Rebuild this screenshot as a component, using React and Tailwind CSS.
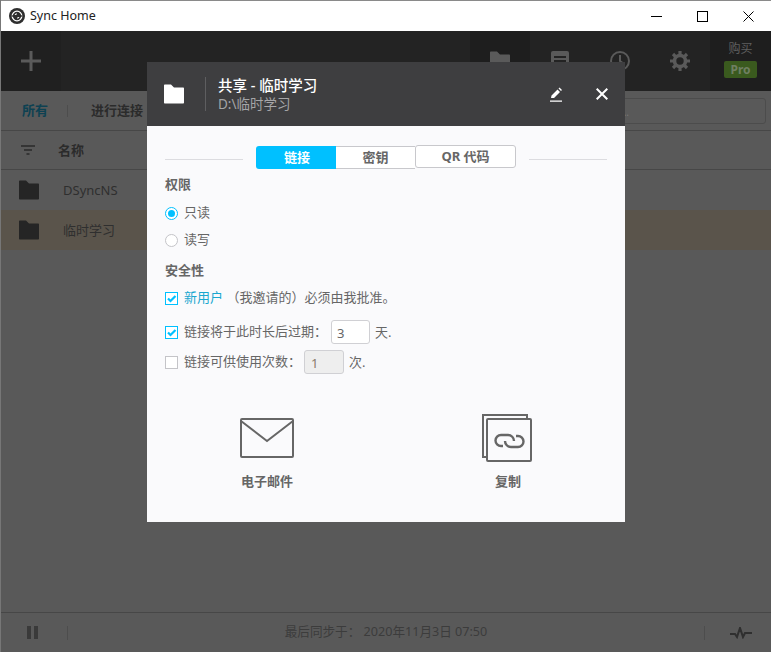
const font = { fontFamily: '"Noto Sans", "Noto Sans CJK SC", sans-serif' };

function FolderIcon({ className }) {
  return (
    <svg viewBox="0 0 20 20" className={className} fill="currentColor">
      <path d="M0 1.5C0 .9.4.5 1 .5h6l3 3h9c.6 0 1 .4 1 1v14c0 .6-.4 1-1 1H1c-.6 0-1-.4-1-1z" />
    </svg>
  );
}

function Radio({ checked, label }) {
  return (
    <div className="flex items-center gap-[6px] h-[20px]">
      <span
        className={`w-[13px] h-[13px] rounded-full border flex items-center justify-center bg-white ${
          checked ? "border-[#00c0ff]" : "border-[#c4c4c8]"
        }`}
      >
        {checked && <span className="w-[7px] h-[7px] rounded-full bg-[#00c0ff]" />}
      </span>
      <span className="text-[13px] text-[#666]">{label}</span>
    </div>
  );
}

function Check({ checked }) {
  return (
    <span
      className={`w-[13px] h-[13px] border flex items-center justify-center bg-white shrink-0 ${
        checked ? "border-[#00c0ff]" : "border-[#c4c4c8]"
      }`}
    >
      {checked && (
        <svg viewBox="0 0 11 11" className="w-[11px] h-[11px]" fill="none" stroke="#00c0ff" strokeWidth="2.2">
          <path d="M2 5.5l2.5 2.5 5-5" />
        </svg>
      )}
    </span>
  );
}

export default function App() {
  const tabs = [
    { label: "链接", cls: "w-[80px] h-[23px] pl-[2px] bg-[#00c0ff] text-white rounded-l-[3px]" },
    { label: "密钥", cls: "w-[79px] h-[23px] border-y border-[#c8c8cc] text-[#666] bg-white" },
    { label: "QR 代码", cls: "w-[101px] h-[23px] -mt-px border border-[#c8c8cc] text-[#666] rounded-[3px] bg-white" },
  ];

  return (
    <div className="relative w-[771px] h-[652px] overflow-hidden bg-[#595959] flex flex-col border-l border-[#777]" style={font}>
      <div className="h-px bg-[#8a8a8a] shrink-0" />

      {/* title bar */}
      <div className="h-[30px] bg-white flex items-center shrink-0">
        <svg viewBox="0 0 16 16" className="w-[16px] h-[16px] ml-[8px]">
          <circle cx="8" cy="8" r="8" fill="#2e2e2e" />
          <circle cx="8" cy="8" r="4.8" fill="none" stroke="#fff" strokeWidth="1.3" />
          <path d="M2.500 8h11" stroke="#2e2e2e" strokeWidth="1.400" />
          <path d="M5.500 7l2-2.200v2.200zM10.500 9l-2 2.200V9z" fill="#fff" />
        </svg>
        <span className="ml-[5px] text-[12.5px] text-[#222]">Sync Home</span>
        <div className="ml-auto flex items-center">
          <button className="w-[46px] h-[30px] flex items-center justify-center">
            <span className="w-[11px] h-px bg-black" />
          </button>
          <button className="w-[46px] h-[30px] flex items-center justify-center">
            <span className="w-[11px] h-[11px] border border-black" />
          </button>
          <button className="w-[46px] h-[30px] flex items-center justify-center">
            <svg viewBox="0 0 11 11" className="w-[11px] h-[11px]" stroke="#000" strokeWidth="1">
              <path d="M.5.5l10 10M10.500.5l-10 10" />
            </svg>
          </button>
        </div>
      </div>

      {/* toolbar */}
      <div className="h-[60px] bg-[#232323] flex shrink-0">
        <div className="w-[60px] bg-[#202020] flex items-center justify-center">
          <svg viewBox="0 0 20 20" className="w-[20px] h-[20px]" stroke="#5a5a5a" strokeWidth="3">
            <path d="M10 0v20M0 10h20" />
          </svg>
        </div>
        <div className="ml-auto flex">
          <div className="w-[60px] bg-[#1e1e1e] flex items-center justify-center">
            <FolderIcon className="w-[20px] h-[20px] text-[#5a5a5a]" />
          </div>
          <div className="w-[60px] flex items-center justify-center">
            <svg viewBox="0 0 18 20" className="w-[18px] h-[20px]">
              <rect width="18" height="20" rx="2" fill="#5a5a5a" />
              <path d="M3 6h12M3 10h12" stroke="#232323" strokeWidth="2" />
            </svg>
          </div>
          <div className="w-[60px] flex items-center justify-center">
            <svg viewBox="0 0 20 20" className="w-[20px] h-[20px]" fill="none" stroke="#5a5a5a" strokeWidth="2">
              <circle cx="10" cy="10" r="9" />
              <path d="M10 4v6l4 3" />
            </svg>
          </div>
          <div className="w-[60px] flex items-center justify-center">
            <svg viewBox="0 0 20 20" className="w-[20px] h-[20px]" fill="none" stroke="#5a5a5a">
              <circle cx="10" cy="10" r="5.5" strokeWidth="3.6" />
              <path
                d="M10 0v4M10 16v4M0 10h4M16 10h4M3 3l2.800 2.800M14.200 14.200L17 17M17 3l-2.800 2.800M5.800 14.200L3 17"
                strokeWidth="3.2"
              />
            </svg>
          </div>
          <div className="w-[61px] bg-[#1e1e1e] flex flex-col items-center pt-[9px]">
            <span className="text-[12px] leading-[18px] text-[#5e5e5e]">购买</span>
            <span className="mt-[3px] w-[33px] h-[17px] rounded-[2px] bg-[#3a5a1e] text-[#6f7f62] text-[12px] leading-[17px] font-bold text-center">
              Pro
            </span>
          </div>
        </div>
      </div>

      {/* filter bar */}
      <div className="h-[40px] flex items-center shrink-0 border-b border-[#474747]">
        <span className="ml-[21px] text-[13px] font-bold text-[#0d4152]">所有</span>
        <span className="ml-[19px] w-px h-[12px] bg-[#4d4d4d]" />
        <span className="ml-[23px] text-[13px] font-bold text-[#2b2b2b]">进行连接</span>
        <div className="ml-auto mr-[5px] w-[200px] h-[26px] border border-[#4c4c4c] rounded-[3px] pl-[54px] text-[10px] leading-[26px] text-[#777]">
          ...
        </div>
      </div>

      {/* list */}
      <div className="h-[39px] flex items-center shrink-0 border-b border-[#474747]">
        <svg viewBox="0 0 14 10" className="ml-[20px] w-[14px] h-[10px]" stroke="#2a2a2a" strokeWidth="1.6">
          <path d="M0 1h14M3 5h8M5.500 9h3" />
        </svg>
        <span className="ml-[23px] mt-[2px] text-[13px] font-bold text-[#2b2b2b]">名称</span>
      </div>
      {[
        { name: "DSyncNS", bg: "" },
        { name: "临时学习", bg: "bg-[#5a544b]" },
      ].map((row) => (
        <div key={row.name} className={`h-[40px] flex items-center shrink-0 ${row.bg}`}>
          <FolderIcon className="ml-[18px] w-[20px] h-[20px] text-[#252525]" />
          <span className="ml-[24px] mt-[2px] text-[13px] text-[#2f2f2f]">{row.name}</span>
        </div>
      ))}

      {/* status bar */}
      <div className="mt-auto h-[40px] flex items-center border-t border-[#474747] shrink-0">
        <div className="ml-[26px] flex gap-[3px]">
          <span className="w-[4px] h-[13px] bg-[#3a3a3a]" />
          <span className="w-[4px] h-[13px] bg-[#3a3a3a]" />
        </div>
        <span className="ml-[29px] w-px h-[14px] bg-[#4d4d4d]" />
        <span className="flex-1 text-center text-[12.6px] text-[#3c3c3c]">最后同步于： 2020年11月3日 07:50</span>
        <span className="w-px h-[14px] bg-[#4d4d4d]" />
        <svg viewBox="0 0 22 12" className="ml-[25px] mr-[19px] w-[22px] h-[12px]" fill="none" stroke="#2f2f2f" strokeWidth="2">
          <path d="M0 7h5l2 3 3-9 3 9 2-4h7" />
        </svg>
      </div>

      {/* share dialog */}
      <div className="absolute left-[146px] top-[62px] w-[478px] h-[460px] bg-[#fafafc] flex flex-col">
        <div className="h-[64px] bg-[#3e3e40] flex items-center shrink-0">
          <FolderIcon className="ml-[17px] w-[20px] h-[20px] text-white" />
          <span className="ml-[21px] w-px h-[34px] bg-[#5e5e60]" />
          <div className="ml-[12px] flex flex-col">
            <span className="text-[14.5px] leading-[20px] font-medium text-white">共享 - 临时学习</span>
            <span className="text-[13.5px] leading-[18px] text-[#a5a5a7]">D:\临时学习</span>
          </div>
          <svg viewBox="0 0 12 15" className="ml-auto w-[12px] h-[15px]" fill="#fff">
            <path d="M1 11l.5-2.500 6-6L10 5l-6 6zM8.500 1.500l1-1L12 3l-1 1zM0 13.500h12v1.300H0z" />
          </svg>
          <svg viewBox="0 0 12 12" className="ml-[34px] mr-[17px] w-[12px] h-[12px]" stroke="#fff" strokeWidth="2">
            <path d="M.7.7l10.600 10.600M11.300.7L.7 11.300" />
          </svg>
        </div>

        <div className="flex flex-col flex-1 px-[18px]">
          <div className="mt-[20px] flex items-start">
            <span className="mt-[13px] w-[78px] h-px bg-[#dcdce0]" />
            <div className="ml-[13px] flex items-start">
              {tabs.map((t) => (
                <div key={t.label} className={`flex items-center justify-center text-[13px] font-bold ${t.cls}`}>
                  {t.label}
                </div>
              ))}
            </div>
            <span className="ml-[13px] mt-[13px] w-[78px] h-px bg-[#dcdce0]" />
          </div>

          <div className="mt-[6px] text-[13px] leading-[18px] font-bold text-[#666]">权限</div>
          <div className="mt-[10px] flex flex-col gap-[7px]">
            <Radio checked label="只读" />
            <Radio label="读写" />
          </div>

          <div className="mt-[11px] text-[13px] leading-[18px] font-bold text-[#666]">安全性</div>

          <div className="mt-[9px] flex items-center gap-[6px] h-[20px] text-[13px] text-[#666] whitespace-nowrap">
            <Check checked />
            <span>
              <span className="text-[#1ba7cf]">新用户</span> （我邀请的）必须由我批准。
            </span>
          </div>
          <div className="mt-[12px] flex items-center gap-[6px] h-[24px] text-[13px] text-[#666] whitespace-nowrap">
            <Check checked />
            <span className="w-[141px]">链接将于此时长后过期：</span>
            <span className="w-[39px] h-[24px] border border-[#d0d0d4] rounded-[3px] bg-white pl-[5px] leading-[24px]">3</span>
            <span className="-ml-[1px] mt-[2px]">天.</span>
          </div>
          <div className="mt-[6px] flex items-center gap-[6px] h-[24px] text-[13px] text-[#666] whitespace-nowrap">
            <Check />
            <span className="w-[114px]">链接可供使用次数：</span>
            <span className="w-[40px] h-[24px] border border-[#d0d0d4] rounded-[3px] bg-[#eeeeee] pl-[6px] leading-[24px] text-[#8a7a6a]">1</span>
            <span className="-ml-[1px] mt-[2px]">次.</span>
          </div>

          <div className="mt-[40px] flex">
            <div className="w-[204px] flex flex-col items-center">
              <svg viewBox="0 0 54 40" className="mt-[4px] w-[54px] h-[40px]" fill="none" stroke="#666" strokeWidth="2">
                <rect x="1" y="1" width="52" height="38" rx="1" />
                <path d="M1 3l26 20L53 3" />
              </svg>
              <span className="mt-[14px] text-[13px] leading-[18px] font-bold text-[#666]">电子邮件</span>
            </div>
            <div className="ml-[39px] w-[198px] flex flex-col items-center">
              <svg viewBox="0 0 50 48" className="w-[50px] h-[48px]" fill="none" stroke="#666" strokeWidth="2">
                <path d="M4 43H1V1h44v3" />
                <rect x="5" y="5" width="44" height="42" rx="1" />
                <path
                  d="M32 27a6 6 0 0 0-6-6h-7a5.500 5.500 0 0 0 0 11h2M23 27a6 6 0 0 0 6 6h7a5.500 5.500 0 0 0 0-11h-2"
                  strokeWidth="2.400"
                />
              </svg>
              <span className="mt-[10px] ml-[2px] text-[13px] leading-[18px] font-bold text-[#666]">复制</span>
            </div>
          </div>
        </div>
      </div>
    </div>
  );
}
